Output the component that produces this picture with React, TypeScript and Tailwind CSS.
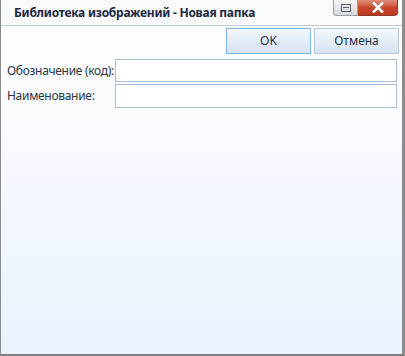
import React from "react";

export default function App() {
    return (
        <div className="w-[405px] h-[356px] flex flex-col border-l border-l-[#8c8c8c] border-r-[3px] border-r-[#8c8c8c] border-b-2 border-b-[#7d7d7d] bg-gradient-to-b from-[#ffffff] to-[#eaf2fe] font-['Segoe_UI','Noto_Sans',sans-serif] text-[12px] text-[#2a3646] overflow-hidden">
            {/* title bar */}
            <div className="h-[26px] shrink-0 flex items-start border-b border-b-[#c5cbd3] bg-[#f9fafc]">
                <div className="pl-[13px] pt-[5px] font-bold text-[12px] leading-[16px] text-[#1b2840] tracking-[-0.25px] whitespace-nowrap">
                    Библиотека изображений - Новая папка
                </div>
                <div className="ml-auto mr-[4px] flex">
                    <div className="w-[25px] h-[16px] flex items-center justify-center rounded-bl-[4px] border border-t-0 border-[#9aa1a9] bg-gradient-to-b from-[#f4f5f6] to-[#d6d9dd]">
                        <div className="w-[10px] h-[8px] border border-[#5a6068] flex items-center justify-center">
                            <div className="w-[6px] h-[1px] bg-[#5a6068]" />
                        </div>
                    </div>
                    <div className="w-[40px] h-[16px] flex items-center justify-center rounded-br-[4px] border border-t-0 border-l-0 border-[#8f3a2c] bg-gradient-to-b from-[#e1907e] via-[#c9472f] to-[#b93920]">
                        <svg width="14" height="11" viewBox="0 0 14 11">
                            <path d="M3 1.5 L11 9.5 M11 1.5 L3 9.5" stroke="#6b2a1f" strokeWidth="3.6" strokeLinecap="square" opacity="0.35" />
                            <path d="M3 1.5 L11 9.5 M11 1.5 L3 9.5" stroke="#ffffff" strokeWidth="2.8" strokeLinecap="square" />
                        </svg>
                    </div>
                </div>
            </div>

            {/* toolbar buttons */}
            <div className="flex justify-end gap-[3px] pr-[3px] pt-[2px]">
                <button className="w-[85px] h-[26px] border border-[#7eb4ea] bg-gradient-to-b from-[#f3f7fc] to-[#d6e3f1] text-[#1e2f45] text-[12px]">
                    OK
                </button>
                <button className="w-[85px] h-[26px] border border-[#b8c9dc] bg-gradient-to-b from-[#f3f7fc] to-[#d6e3f1] text-[#1e2f45] text-[12px]">
                    Отмена
                </button>
            </div>

            {/* form */}
            <div className="flex flex-col gap-[2px] pt-[5px] pl-[6px] pr-[5px]">
                <div className="flex items-center">
                    <label className="w-[108px] shrink-0 whitespace-nowrap tracking-[-0.3px]">Обозначение (код):</label>
                    <input className="flex-1 min-w-0 h-[23px] border border-[#abc0d5] bg-white outline-none" />
                </div>
                <div className="flex items-center">
                    <label className="w-[108px] shrink-0 whitespace-nowrap tracking-[-0.3px]">Наименование:</label>
                    <input className="flex-1 min-w-0 h-[24px] border border-[#abc0d5] bg-white outline-none" />
                </div>
            </div>
        </div>
    );
}
